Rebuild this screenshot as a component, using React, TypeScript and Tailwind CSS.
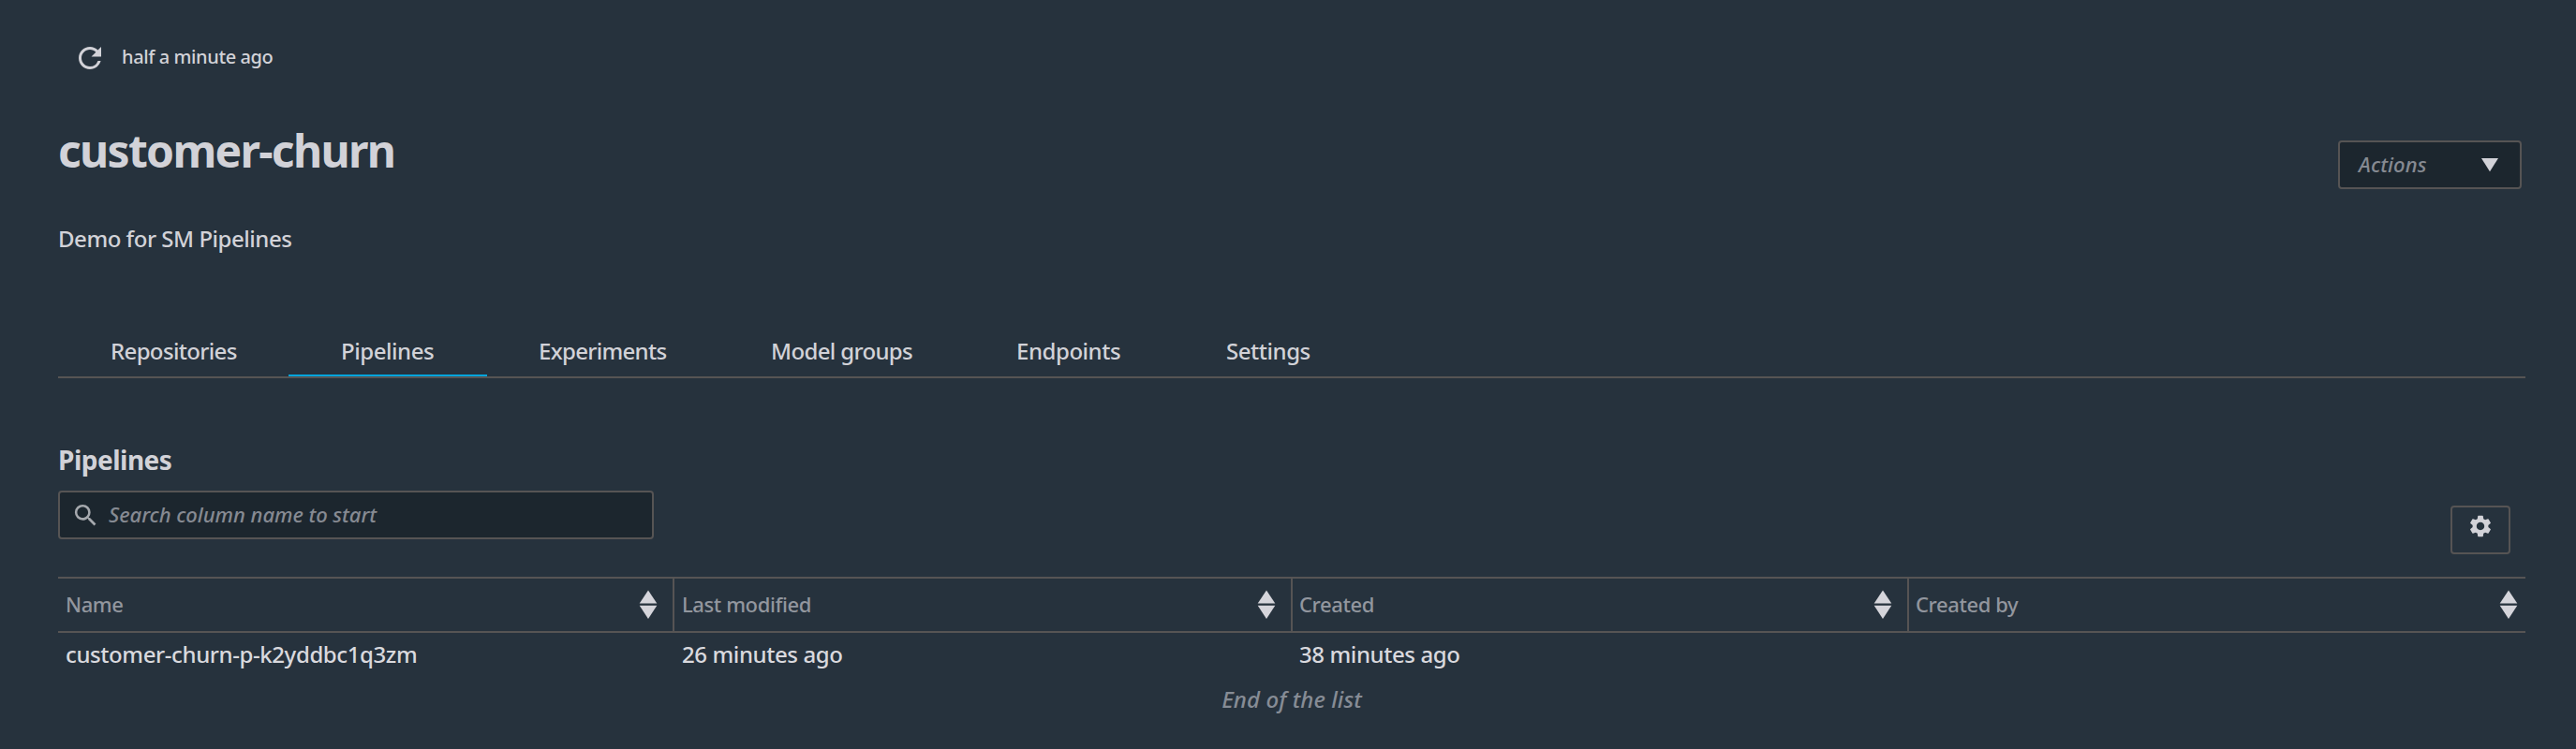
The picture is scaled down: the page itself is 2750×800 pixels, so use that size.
import { MdRefresh, MdSearch, MdSettings } from "react-icons/md";

const tabs = [
  { label: "Repositories", cls: "w-[246px] pl-[56px] tracking-[-0.65px]" },
  { label: "Pipelines", cls: "w-[212px] pl-[56px] tracking-[-0.45px]" },
  { label: "Experiments", cls: "w-[248px] pl-[55px] tracking-[-0.7px]" },
  { label: "Model groups", cls: "w-[262px] pl-[55px] tracking-[-0.65px]" },
  { label: "Endpoints", cls: "w-[223px] pl-[55px] tracking-[-0.45px]" },
  { label: "Settings", cls: "w-[202px] pl-[56px] tracking-[-0.45px]" },
];

const columns = [
  { label: "Name", value: "customer-churn-p-k2yddbc1q3zm", cls: "w-[658px] border-r-2 pl-[8px] pr-[16px]" },
  { label: "Last modified", value: "26 minutes ago", cls: "w-[660px] border-r-2 pl-[8px] pr-[16px]" },
  { label: "Created", value: "38 minutes ago", cls: "w-[658px] border-r-2 pl-[7px] pr-[16px]" },
  { label: "Created by", value: "", cls: "w-[658px] pl-[7px] pr-[8px]" },
];

function SortIcon() {
  return (
    <svg width="20" height="32" viewBox="0 0 20 32" className="shrink-0 fill-[#d5d5db]">
      <path d="M10 0.5 19.3 14.6H0.7Z" />
      <path d="M0.7 16.8H19.3L10 31Z" />
    </svg>
  );
}

export default function App() {
  return (
    <div
      className="flex h-[800px] w-[2750px] flex-col overflow-hidden bg-[#26323d] pl-[62px] font-medium text-[#d2d2d8]"
      style={{ fontFamily: '"Noto Sans", "Open Sans", sans-serif' }}
    >
      <div className="mt-[44px] flex h-[36px] items-center pl-[16px]">
        <MdRefresh size={36} />
        <span className="-mt-[2px] ml-[16px] text-[20px] leading-[28px] tracking-[-0.4px]">half a minute ago</span>
      </div>

      <div className="mt-[51px] flex w-[2630px] items-start justify-between">
        <h1 className="text-[48px] leading-[60px] font-bold tracking-[-1.7px]">customer-churn</h1>
        <button className="mt-[19px] flex h-[52px] w-[196px] items-center justify-between rounded-[4px] border-2 border-[#565454] bg-[#1c262e] pr-[22px] pl-[20px]">
          <span className="-mt-[2px] text-[22px] font-medium tracking-[0.1px] text-[#868a92] italic">Actions</span>
          <svg width="20" height="16" viewBox="0 0 20 16" className="fill-[#d2d2d8]">
            <path d="M1 1H19L10 15.2Z" />
          </svg>
        </button>
      </div>

      <p className="mt-[37px] text-[24px] leading-[32px] tracking-[-0.47px]">Demo for SM Pipelines</p>

      <nav className="mt-[87px] flex w-[2634px] border-b-2 border-[#565454] text-[24px] leading-[32px]">
        {tabs.map((t) => (
          <div
            key={t.label}
            className={`${t.cls} border-b-2 pt-[1px] pb-[9px] ${t.label === "Pipelines" ? "border-[#00a4dc]" : "border-transparent"}`}
          >
            {t.label}
          </div>
        ))}
      </nav>

      <h2 className="mt-[69px] text-[28px] leading-[36px] font-bold tracking-[-0.5px]">Pipelines</h2>

      <div className="mt-[15px] flex w-[2618px] items-start justify-between">
        <div className="flex h-[52px] w-[636px] items-center rounded-[4px] border-2 border-[#565454] bg-[#1c262e] pl-[12px]">
          <MdSearch size={31} className="text-[#a6a9ae]" />
          <span className="-mt-[2px] ml-[9px] text-[22px] tracking-[-0.04px] text-[#868a92] italic">
            Search column name to start
          </span>
        </div>
        <button className="mt-[16px] flex h-[52px] w-[64px] items-start justify-center rounded-[4px] border-2 border-[#565454] pt-[6px]">
          <MdSettings size={28} />
        </button>
      </div>

      <div className="mt-[24px] flex h-[60px] w-[2634px] border-y-2 border-[#565454]">
        {columns.map((c) => (
          <div key={c.label} className={`${c.cls} flex items-center justify-between border-[#565454]`}>
            <span className="-mt-[2px] text-[22px] tracking-[-0.4px] text-[#92969e]">{c.label}</span>
            <SortIcon />
          </div>
        ))}
      </div>
      <div className="mt-[7px] flex w-[2634px] text-[24px] leading-[32px] tracking-[-0.4px] text-[#d9d9de]">
        {columns.map((c) => (
          <div key={c.label} className={`${c.cls} border-transparent`}>
            {c.value}
          </div>
        ))}
      </div>
      <p className="mt-[16px] w-[2634px] text-center text-[24px] leading-[32px] tracking-[0.1px] text-[#868c95] italic">
        End of the list
      </p>
    </div>
  );
}
